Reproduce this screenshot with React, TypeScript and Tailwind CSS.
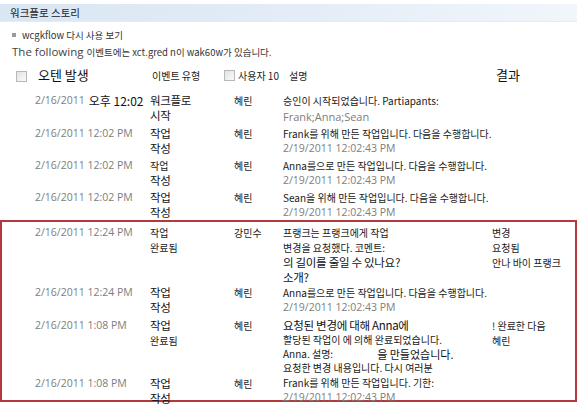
import React from "react";

const ko = "font-['Noto_Sans_CJK_KR',sans-serif]";
const lat = "font-['Open_Sans','Noto_Sans_CJK_KR',sans-serif]";

interface TextProps {
  children: React.ReactNode;
  tight?: boolean;
}

const Small = ({ children, tight }: TextProps) => (
  <div
    className={`${ko} text-[10px] ${tight ? "leading-[14px]" : "leading-[15px]"} text-[#1a1a1a] whitespace-nowrap`}
  >
    {children}
  </div>
);
const Big = ({ children }: TextProps) => (
  <div className={`${ko} text-[11.5px] leading-[15px] text-[#111] tracking-[-0.3px] whitespace-nowrap`}>
    {children}
  </div>
);
const Gray = ({ children }: { children: React.ReactNode }) => (
  <div className={`${lat} text-[10.5px] leading-[15px] text-[#7d7d7d] whitespace-nowrap`}>{children}</div>
);

interface RowProps {
  date: React.ReactNode;
  type: React.ReactNode;
  user: string;
  desc: React.ReactNode;
  result?: React.ReactNode;
  h: string;
  inBox?: boolean;
}

const Row = (props: RowProps) => (
  <div
    className={`grid grid-cols-[115px_84px_49px_209px_1fr] ${props.h} ${
      props.inBox ? "pl-[33px]" : "pl-[35px]"
    }`}
  >
    <div>{props.date}</div>
    <div>{props.type}</div>
    <div>
      <Small>{props.user}</Small>
    </div>
    <div>{props.desc}</div>
    <div>{props.result}</div>
  </div>
);

const Checkbox = () => (
  <div className="w-[11px] h-[11px] border border-[#b8b8b8] bg-gradient-to-br from-[#e2e2e2] to-[#fafafa]" />
);

export default function App() {
  return (
    <div className="w-[577px] h-[406px] bg-white overflow-hidden">
      <div className="mt-[4px] h-[18px] bg-gradient-to-r from-[#d9e6f3] via-[#e3ecf7] to-[#f1f6fb] border-b border-[#e4ebf3] flex items-center pl-[10px]">
        <span className={`${ko} text-[10.5px] text-[#222]`}>워크플로 스토리</span>
      </div>

      <div className="flex items-center h-[16px] mt-[5px] pl-[12px] gap-[6px]">
        <div className="w-[4px] h-[4px] bg-[#9a9a9a]" />
        <span className={`${ko} text-[9.5px] text-[#333]`}>wcgkflow 다시 사용 보기</span>
      </div>
      <div className="flex items-end h-[16px] pl-[12px] gap-[3px]">
        <span className="font-['Open_Sans',sans-serif] text-[11.5px] leading-[15px] text-[#444]">The following</span>
        <span className={`${ko} text-[9.5px] leading-[14px] text-[#333]`}>이벤트에는 xct.gred n이 wak60w가 있습니다.</span>
      </div>

      <div className="h-[18px] mt-[8px] relative">
        <div className="absolute left-[16px] top-[4px]">
          <Checkbox />
        </div>
        <span className={`${ko} absolute left-[38px] top-0 text-[13px] leading-[16px] text-[#111]`}>오텐 발생</span>
        <span className={`${ko} absolute left-[152px] top-[1px] text-[10px] leading-[15px] text-[#222]`}>이벤트 유형</span>
        <div className="absolute left-[224px] top-[3px]">
          <Checkbox />
        </div>
        <span className={`${ko} absolute left-[238px] top-[1px] text-[10px] leading-[15px] text-[#222]`}>사용자 10</span>
        <span className={`${ko} absolute left-[289px] top-[1px] text-[10px] leading-[15px] text-[#222]`}>설명</span>
        <span className={`${ko} absolute left-[496px] top-0 text-[13px] leading-[16px] text-[#111]`}>결과</span>
      </div>

      <div className="mt-[8px]">
        <Row
          h="h-[33px]"
          date={
            <div className="flex items-end gap-[4px] whitespace-nowrap">
              <span className={`${lat} text-[10.5px] leading-[15px] text-[#7d7d7d]`}>2/16/2011</span>
              <span className={`${ko} text-[12px] leading-[15px] text-[#111]`}>오후 12:02</span>
            </div>
          }
          type={
            <>
              <Big>워크플로</Big>
              <Big>시작</Big>
            </>
          }
          user="혜린"
          desc={
            <>
              <Small>승인이 시작되었습니다. Partiapants:</Small>
              <div className={`${lat} text-[11px] leading-[17px] text-[#7d7d7d]`}>Frank;Anna;Sean</div>
            </>
          }
        />
        <Row
          h="h-[32px]"
          date={<Gray>2/16/2011 12:02 PM</Gray>}
          type={
            <>
              <Big>작업</Big>
              <Big>작성</Big>
            </>
          }
          user="혜린"
          desc={
            <>
              <Small>Frank를 위해 만든 작업입니다. 다음을 수행합니다.</Small>
              <Gray>2/19/2011 12:02:43 PM</Gray>
            </>
          }
        />
        <Row
          h="h-[32px]"
          date={<Gray>2/16/2011 12:02 PM</Gray>}
          type={
            <>
              <Small>작업</Small>
              <Big>작성</Big>
            </>
          }
          user="혜린"
          desc={
            <>
              <Small>Anna를으로 만든 작업입니다. 다음을 수행합니다.</Small>
              <Gray>2/19/2011 12:02:43 PM</Gray>
            </>
          }
        />
        <Row
          h="h-[30px]"
          date={<Gray>2/16/2011 12:02 PM</Gray>}
          type={
            <>
              <Big>작업</Big>
              <Big>작성</Big>
            </>
          }
          user="혜린"
          desc={
            <>
              <Small>Sean을 위해 만든 작업입니다. 다음을 수행합니다.</Small>
              <Gray>2/19/2011 12:02:43 PM</Gray>
            </>
          }
        />
      </div>

      <div className="border-2 border-[#b23a3c] h-[182px] pt-[3px]">
        <Row
          inBox
          h="h-[60px]"
          date={<Gray>2/16/2011 12:24 PM</Gray>}
          type={
            <>
              <Small>작업</Small>
              <Small>완료됨</Small>
            </>
          }
          user="강민수"
          desc={
            <>
              <Small>프랭크는 프랭크에게 작업</Small>
              <Small>변경을 요청했다. 코멘트:</Small>
              <Big>의 길이를 줄일 수 있나요?</Big>
              <Big>소개?</Big>
            </>
          }
          result={
            <>
              <Small>변경</Small>
              <Small>요청됨</Small>
              <Small>안나 바이 프랭크</Small>
            </>
          }
        />
        <Row
          inBox
          h="h-[33px]"
          date={<Gray>2/16/2011 12:24 PM</Gray>}
          type={
            <>
              <Big>작업</Big>
              <Big>작성</Big>
            </>
          }
          user="혜린"
          desc={
            <>
              <Small>Anna를으로 만든 작업입니다. 다음을 수행합니다.</Small>
              <Gray>2/19/2011 12:02:43 PM</Gray>
            </>
          }
        />
        <Row
          inBox
          h="h-[58px]"
          date={<Gray>2/16/2011 1:08 PM</Gray>}
          type={
            <>
              <Big>작업</Big>
              <Small>완료됨</Small>
            </>
          }
          user="혜린"
          desc={
            <>
              <Big>요청된 변경에 대해 Anna에</Big>
              <Small tight>할당된 작업이 에 의해 완료되었습니다.</Small>
              <div className="flex items-end h-[14px] whitespace-nowrap">
                <span className={`${ko} text-[10px] leading-[14px] text-[#1a1a1a]`}>Anna. 설명:</span>
                <span className="inline-block w-[44px]" />
                <span className={`${ko} text-[11px] leading-[14px] text-[#111]`}>을 만들었습니다.</span>
              </div>
              <Small tight>요청한 변경 내용입니다. 다시 여러분</Small>
            </>
          }
          result={
            <>
              <Small>! 완료한 다음</Small>
              <Small>혜린</Small>
            </>
          }
        />
        <Row
          inBox
          h="h-[26px]"
          date={<Gray>2/16/2011 1:08 PM</Gray>}
          type={
            <>
              <Big>작업</Big>
              <Big>작성</Big>
            </>
          }
          user="혜린"
          desc={
            <>
              <Small tight>Frank를 위해 만든 작업입니다. 기한:</Small>
              <Gray>2/19/2011 12:02:43 PM</Gray>
            </>
          }
        />
      </div>
    </div>
  );
}
